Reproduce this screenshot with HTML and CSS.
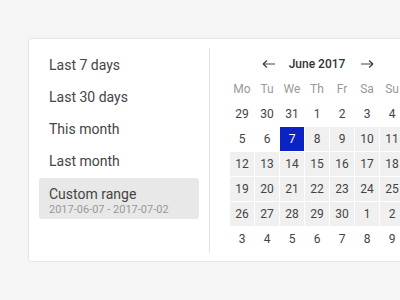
FILE: index.html
```html
<!DOCTYPE html>
<html lang="en">
<head>
  <meta charset="UTF-8" />
  <title>Date range picker</title>
  <link rel="stylesheet" href="styles.css">
</head>
<body>
  <div class="picker">
    <ul class="presets">
      <li class="preset">Last 7 days</li>
      <li class="preset">Last 30 days</li>
      <li class="preset">This month</li>
      <li class="preset">Last month</li>
      <li class="preset preset-active">
        Custom range
        <span class="preset-range">2017-06-07 - 2017-07-02</span>
      </li>
    </ul>

    <div class="calendar">
      <div class="cal-head">
        <span class="nav nav-prev">
          <svg width="14" height="10" viewBox="0 0 14 10"><path d="M1 5H13M1 5L5 1.5M1 5L5 8.5" fill="none" stroke="#444" stroke-width="1.2"/></svg>
        </span>
        <span class="month">June 2017</span>
        <span class="nav nav-next">
          <svg width="14" height="10" viewBox="0 0 14 10"><path d="M1 5H13M13 5L9 1.5M13 5L9 8.5" fill="none" stroke="#444" stroke-width="1.2"/></svg>
        </span>
      </div>
      <div class="cal-grid" id="grid">
        <span class="dow">Mo</span><span class="dow">Tu</span><span class="dow">We</span><span class="dow">Th</span><span class="dow">Fr</span><span class="dow">Sa</span><span class="dow">Su</span>
      </div>
    </div>
  </div>

  <script>
    const grid = document.getElementById('grid');
    const days = [29, 30, 31];
    for (let d = 1; d <= 30; d++) days.push(d);
    for (let d = 1; d <= 9; d++) days.push(d);

    days.forEach((d, i) => {
      const cell = document.createElement('span');
      cell.className = 'day';
      // range 2017-06-07 .. 2017-07-02
      if (i === 9) cell.className += ' day-start';
      else if (i > 9 && i <= 34) cell.className += ' day-range';
      cell.innerText = d;
      grid.appendChild(cell);
    });
  </script>
</body>
</html>
```

FILE: styles.css
```css
html, body {
  margin: 0;
  height: 100%;
  overflow: hidden;
}

body {
  background: #f5f5f5;
  font-family: 'Roboto', 'Liberation Sans', sans-serif;
  color: #444;
  padding: 38px 0 0 28px;
  box-sizing: border-box;
}

.picker {
  display: flex;
  width: 440px;
  height: 224px;
  box-sizing: border-box;
  background: #fff;
  border: 1px solid #e6e6e6;
  border-radius: 3px;
  padding: 9px 10px 8px 10px;
}

.presets {
  list-style: none;
  margin: 0;
  padding: 0 10px 0 0;
  width: 160px;
}

.preset {
  height: 32px;
  line-height: 34px;
  padding-left: 10px;
  font-size: 14px;
  color: #444;
}

.preset-active {
  margin-top: 2px;
  height: 41px;
  box-sizing: border-box;
  line-height: 17px;
  padding: 8px 10px 0;
  background: #e8e8e8;
  border-radius: 3px;
}

.preset-range {
  display: block;
  font-size: 11px;
  line-height: 14px;
  color: #999;
}

.calendar {
  border-left: 1px solid #e3e3e3;
  padding: 4px 0 0 20px;
}

.cal-head,
.cal-grid {
  display: grid;
  grid-template-columns: repeat(7, 24px);
  grid-auto-rows: 24px;
  gap: 1px;
}

.cal-head {
  margin-bottom: 1px;
  align-items: center;
}

.nav {
  display: flex;
  justify-content: center;
  align-items: center;
}

.nav-prev {
  grid-column: 2;
  margin-left: 3px;
}

.nav-next {
  grid-column: 6;
}

.month {
  grid-column: 3 / span 3;
  text-align: center;
  font-size: 12px;
  font-weight: 500;
  color: #333;
}

.dow,
.day {
  display: flex;
  align-items: center;
  justify-content: center;
  font-size: 12px;
}

.dow {
  color: #999;
}

.day {
  color: #444;
}

.day-range {
  background: #f0f0f0;
}

.day-start {
  background: #0b22c4;
  color: #fff;
}
```
